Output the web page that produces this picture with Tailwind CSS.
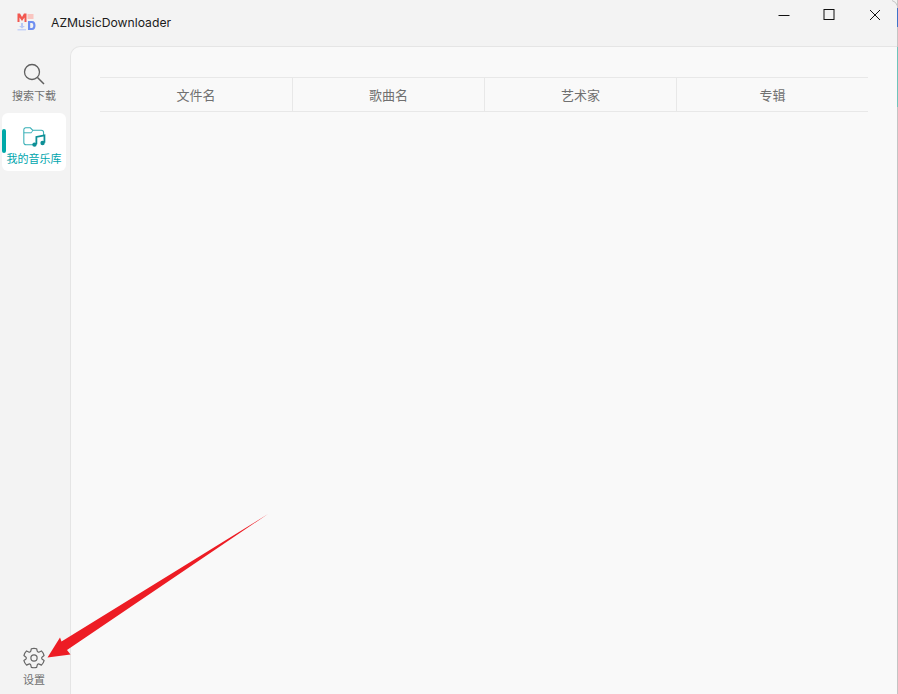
<!DOCTYPE html>
<html lang="zh-CN">
<head>
    <meta charset="UTF-8">
    <title>AZMusicDownloader</title>
    <script src="https://cdn.jsdelivr.net/npm/@tailwindcss/browser@4"></script>
</head>
<body class="relative w-[898px] h-[694px] overflow-hidden bg-[#f3f3f3] font-['Inter','Noto_Sans_CJK_SC',sans-serif]">
    <div class="flex flex-col h-full w-[897px]">
        <!-- Title bar -->
        <header class="flex items-start h-[46px] shrink-0">
            <svg class="ml-[17px] mt-[13px]" width="19" height="18" viewBox="0 0 19 18">
                <path d="M0.500 9V0.500H3L5 4L7 0.500H9.500V9H7.500V4.500L5 8L2.500 4.500V9Z" fill="#f2574f"/>
                <rect x="10.500" y="1" width="6" height="5" fill="#f9c5c0"/>
                <path d="M4 10H6V13H8L5 15.500L2 13H4Z" fill="#b9c9f5"/>
                <path d="M0.500 16H9V17.500H0.500Z" fill="#c6d3f7"/>
                <path d="M11 8H15C17.500 8 18.500 10 18.500 12.500C18.500 15 17.500 17 15 17H11ZM13.200 10V15H14.800C15.800 15 16.300 14 16.300 12.500C16.300 11 15.800 10 14.800 10Z" fill="#6f8ff0" fill-rule="evenodd"/>
            </svg>
            <span class="ml-[15px] mt-[15px] text-[12.2px] leading-[16px] text-[#1b1b1b]">AZMusicDownloader</span>
            <div class="ml-auto flex mt-[8px]">
                <button class="w-[45px] h-[14px] flex items-center justify-center">
                    <svg width="12" height="12" viewBox="0 0 12 12"><path d="M0.500 6.500H11.500" stroke="#111" stroke-width="1"/></svg>
                </button>
                <button class="w-[46px] h-[14px] flex items-center justify-center">
                    <svg width="12" height="12" viewBox="0 0 12 12"><rect x="1" y="0.500" width="10" height="10" fill="none" stroke="#111" stroke-width="1"/></svg>
                </button>
                <button class="w-[45px] h-[14px] flex items-center justify-center">
                    <svg width="12" height="12" viewBox="0 0 12 12"><path d="M1 1L11 11M11 1L1 11" stroke="#111" stroke-width="1"/></svg>
                </button>
            </div>
        </header>

        <div class="flex flex-1 min-h-0">
            <!-- Sidebar -->
            <nav class="w-[70px] shrink-0 flex flex-col pl-[2px]">
                <a class="w-[64px] h-[54px] mt-[17px] flex flex-col items-center">
                    <svg width="22" height="22" viewBox="0 0 22 22" fill="none" stroke="#5f5f5f" stroke-width="1.300">
                        <circle cx="9" cy="9" r="7.500"/>
                        <path d="M14.500 14.500L21 21" stroke-width="1.500"/>
                    </svg>
                    <span class="text-[11px] leading-[14px] mt-[4px] text-[#707070] whitespace-nowrap">搜索下载</span>
                </a>
                <a class="relative w-[64px] h-[58px] mt-[-4px] bg-white rounded-[6px] flex flex-col items-center pt-[14px]">
                    <span class="absolute left-0 top-[16px] w-[4px] h-[24px] rounded-full bg-[#00a8a8]"></span>
                    <svg width="23" height="21" viewBox="0 0 22 20" fill="none" stroke="#35aeb5" stroke-width="1">
                        <path d="M10 17H3C1.600 17 0.800 16.200 0.800 14.800V2.600C0.800 1.400 1.500 0.700 2.600 0.700H7L9.200 3H17.500C19 3 19.700 3.800 19.700 5.200V8"/>
                        <path d="M0.800 5.500H8L9.500 3" stroke-width="0.900"/>
                        <path d="M12.800 16.500V9.500L20.500 8V15" stroke="#0d8f96" stroke-width="1.700"/>
                        <circle cx="11" cy="16.800" r="2.100" fill="#0d8f96" stroke="none"/>
                        <circle cx="18.700" cy="15.300" r="2.100" fill="#0d8f96" stroke="none"/>
                    </svg>
                    <span class="text-[11px] leading-[14px] mt-[4px] text-[#00a5ad] whitespace-nowrap">我的音乐库</span>
                </a>
                <a class="w-[64px] mt-auto mb-[7px] flex flex-col items-center">
                    <svg width="22" height="22" viewBox="0 0 24 24" fill="none" stroke="#666" stroke-width="1.300" stroke-linejoin="round">
                        <circle cx="12" cy="12" r="3.400"/>
                        <path d="M12 1.500c1 0 2 .1 2.900.4l.6 2.500a1.600 1.600 0 0 0 2.300 1l2.300-1.100a10.600 10.600 0 0 1 2.900 5l-2 1.500a1.600 1.600 0 0 0 0 2.500l2 1.500a10.600 10.600 0 0 1-2.900 5l-2.300-1.100a1.600 1.600 0 0 0-2.300 1l-.6 2.500a10.600 10.600 0 0 1-5.800 0l-.6-2.500a1.600 1.600 0 0 0-2.300-1l-2.300 1.100a10.600 10.600 0 0 1-2.900-5l2-1.500a1.600 1.600 0 0 0 0-2.500l-2-1.500a10.600 10.600 0 0 1 2.900-5l2.300 1.100a1.600 1.600 0 0 0 2.300-1l.6-2.500c.9-.3 1.900-.4 2.900-.4Z"/>
                    </svg>
                    <span class="text-[11px] leading-[14px] mt-[4px] text-[#707070]">设置</span>
                </a>
            </nav>

            <!-- Main panel -->
            <main class="flex-1 bg-[#f9f9f9] border-l border-t border-[#e5e5e5] rounded-tl-[10px] pt-[30px] pl-[29px] pr-[29px]">
                <div class="grid grid-cols-4 h-[35px] border-y border-[#e8e8e8] text-[13px] text-[#707070]">
                    <div class="flex items-center justify-center pt-[2px]">文件名</div>
                    <div class="flex items-center justify-center pt-[2px] border-l border-[#e8e8e8]">歌曲名</div>
                    <div class="flex items-center justify-center pt-[2px] border-l border-[#e8e8e8]">艺术家</div>
                    <div class="flex items-center justify-center pt-[2px] border-l border-[#e8e8e8]">专辑</div>
                </div>
            </main>
        </div>
    </div>

    <!-- Window edge, desktop showing behind it -->
    <div class="absolute right-0 top-0 w-px h-full bg-[#c4c4c4]">
        <div class="absolute top-[8px] w-px h-[19px] bg-[#3f74c8]"></div>
        <div class="absolute top-[47px] w-px h-[60px] bg-[#6fc4bc]"></div>
    </div>

    <!-- Red annotation arrow -->
    <svg class="absolute left-0 top-0 pointer-events-none" width="898" height="694" viewBox="0 0 898 694">
        <path d="M892 0.500Q896 1.500 897.500 6" fill="none" stroke="#c4c4c4"/>
        <path d="M268 514L67 650L70.500 654.500L47.500 657.500L60 637.500L61.500 641.500Z" fill="#ed1c24"/>
    </svg>
</body>
</html>
